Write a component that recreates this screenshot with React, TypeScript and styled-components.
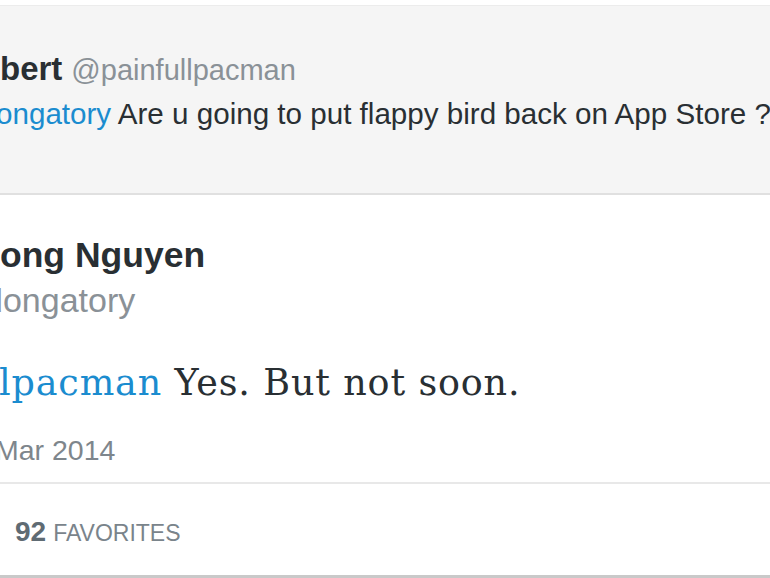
import React from "react"
import styled, { createGlobalStyle } from "styled-components"

const GlobalStyle = createGlobalStyle`
  html, body {
    margin: 0;
    padding: 0;
    background: #fff;
  }
  body {
    font-family: "Liberation Sans", Arial, sans-serif;
    color: #292f33;
    -webkit-font-smoothing: antialiased;
  }
`

// the picture is a crop of a wider tweet page, so some lines run off the left edge
const Frame = styled.div`
  width: 770px;
  height: 578px;
  overflow: hidden;
  display: flex;
  flex-direction: column;
`

const Line = styled.div<{ $bleed?: number }>`
  margin-left: ${(p) => -(p.$bleed ?? 0)}px;
  white-space: nowrap;
`

const Reply = {
  Box: styled.div`
    margin-top: 5px;
    height: 190px;
    box-sizing: border-box;
    padding-top: 43px;
    background: #f5f5f5;
    border-top: 1px solid #ececec;
    border-bottom: 2px solid #e0e0e0;
  `,
  Header: styled(Line)`
    height: 40px;
    line-height: 40px;
  `,
  Name: styled.span`
    font-size: 33px;
    font-weight: 700;
    color: #292f33;
  `,
  Handle: styled.span`
    font-size: 29px;
    color: #8a9197;
    margin-left: 9px;
  `,
  Text: styled(Line)`
    margin-top: 5px;
    height: 40px;
    line-height: 40px;
    font-size: 29.6px;
    color: #292f33;
  `,
}

const Link = styled.span`
  color: #1b8ccf;
`

const Tweet = {
  Body: styled.div`
    flex: 1;
    display: flex;
    flex-direction: column;
    padding-top: 38px;
    border-bottom: 3px solid #c9c9c9;
  `,
  FullName: styled(Line)`
    height: 44px;
    line-height: 44px;
    font-size: 35.5px;
    font-weight: 700;
    color: #292f33;
  `,
  ScreenName: styled(Line)`
    margin-top: 3px;
    height: 40px;
    line-height: 40px;
    font-size: 34px;
    color: #8a9197;
  `,
  Text: styled(Line)`
    margin-top: 36px;
    height: 54px;
    line-height: 54px;
    font-family: "DejaVu Serif", Georgia, serif;
    font-size: 36.5px;
    letter-spacing: 0.85px;
    color: #292f33;
  `,
  Time: styled(Line)`
    margin-top: 22px;
    height: 36px;
    line-height: 36px;
    font-size: 28.5px;
    color: #7e868c;
  `,
}

const Stats = {
  Row: styled.div`
    margin-top: 14px;
    border-top: 2px solid #e8e8e8;
    padding: 30px 0 0 15px;
    height: 36px;
    line-height: 36px;
    display: flex;
    align-items: baseline;
    gap: 7px;
  `,
  Count: styled.strong`
    font-size: 28px;
    font-weight: 700;
    color: #5f6b73;
  `,
  Label: styled.span`
    font-size: 23px;
    color: #7a848b;
    text-transform: uppercase;
  `,
}

export default function App() {
  return (
    <Frame>
      <GlobalStyle />
      <Reply.Box>
        <Reply.Header>
          <Reply.Name>bert</Reply.Name>
          <Reply.Handle>@painfullpacman</Reply.Handle>
        </Reply.Header>
        <Reply.Text $bleed={4}>
          <Link>ongatory</Link> Are u going to put flappy bird back on App Store ?
        </Reply.Text>
      </Reply.Box>
      <Tweet.Body>
        <Tweet.FullName>ong Nguyen</Tweet.FullName>
        <Tweet.ScreenName $bleed={16}>dongatory</Tweet.ScreenName>
        <Tweet.Text $bleed={1}>
          <Link>lpacman</Link> Yes. But not soon.
        </Tweet.Text>
        <Tweet.Time $bleed={5}>Mar 2014</Tweet.Time>
        <Stats.Row>
          <Stats.Count>92</Stats.Count>
          <Stats.Label>Favorites</Stats.Label>
        </Stats.Row>
      </Tweet.Body>
    </Frame>
  )
}
